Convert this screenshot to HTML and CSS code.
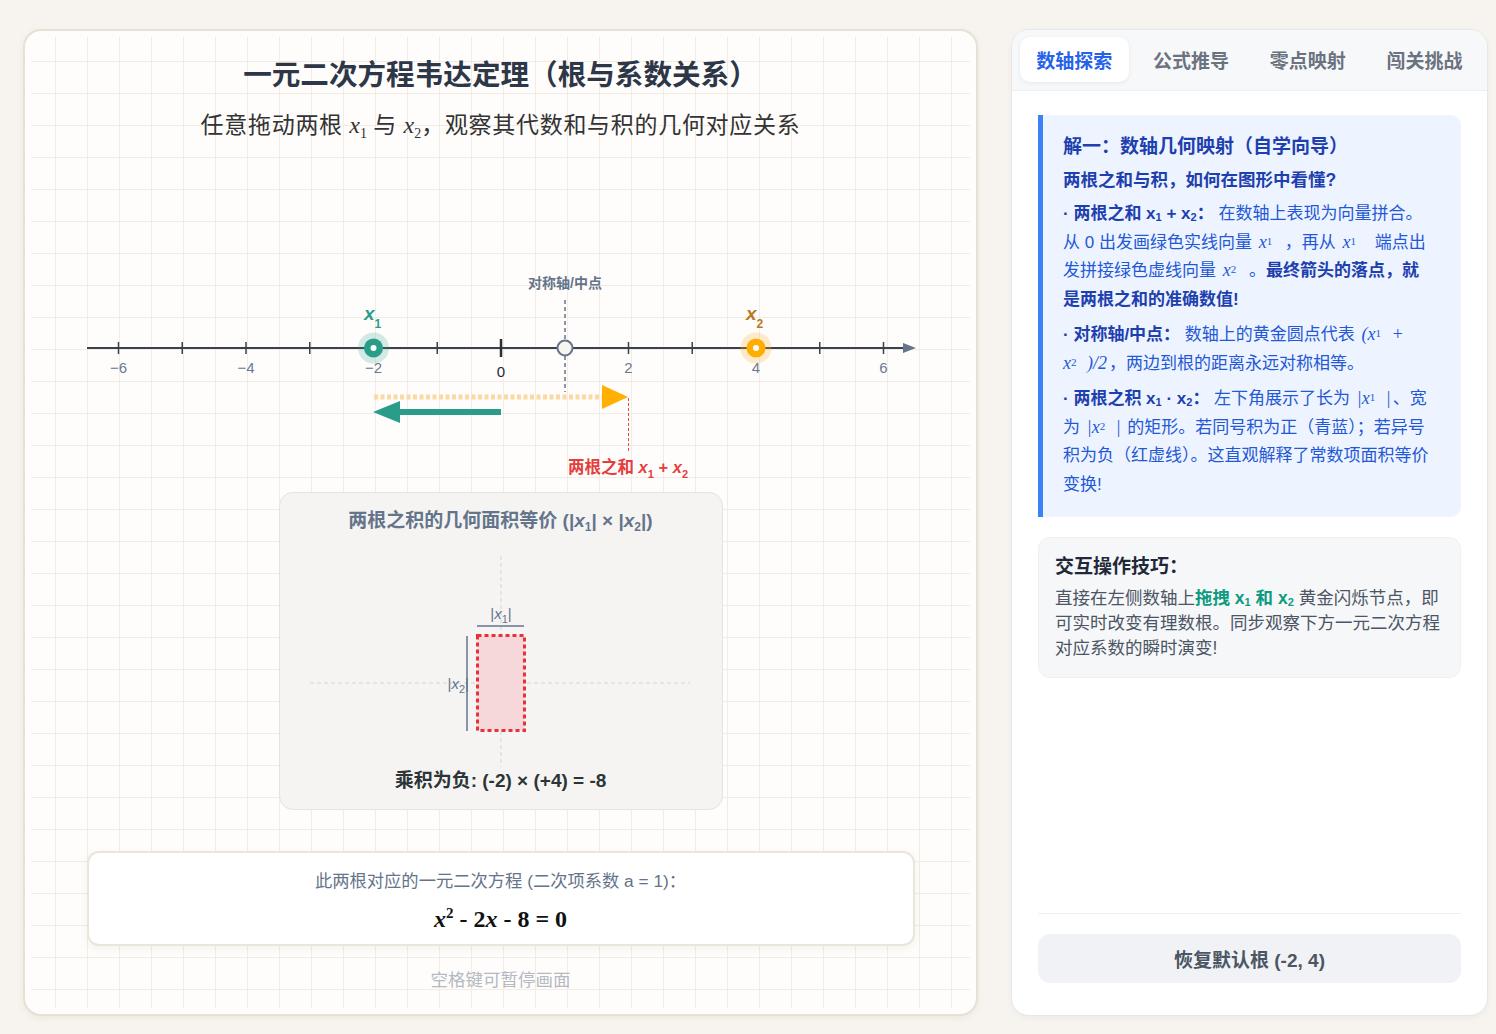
FILE: index.html
```html
<!DOCTYPE html>
<html lang="zh-CN">
<head>
<meta charset="utf-8">
<title>韦达定理 · 数轴探索</title>
<link rel="stylesheet" href="styles.css">
</head>
<body>
<main class="board">
  <div class="sheet">
    <h1 class="title">一元二次方程韦达定理（根与系数关系）</h1>
    <p class="subtitle">任意拖动两根 <i class="mv">x<sub>1</sub></i> 与 <i class="mv">x<sub>2</sub></i>，观察其代数和与积的几何对应关系</p>

    <!-- number line, drawn in page coordinates -->
    <svg class="axis" viewBox="31 141 939 345" width="939" height="345">
      <line x1="87" y1="347" x2="906" y2="347" class="axis-line"/>
      <polygon points="903,342 916,347 903,352" class="axis-head"/>

      <g class="ticks">
        <line x1="118.5" y1="341" x2="118.5" y2="353"/>
        <line x1="182.25" y1="341" x2="182.25" y2="353"/>
        <line x1="246" y1="341" x2="246" y2="353"/>
        <line x1="309.75" y1="341" x2="309.75" y2="353"/>
        <line x1="373.5" y1="341" x2="373.5" y2="353"/>
        <line x1="437.25" y1="341" x2="437.25" y2="353"/>
        <line x1="564.75" y1="341" x2="564.75" y2="353"/>
        <line x1="628.5" y1="341" x2="628.5" y2="353"/>
        <line x1="692.25" y1="341" x2="692.25" y2="353"/>
        <line x1="756" y1="341" x2="756" y2="353"/>
        <line x1="819.75" y1="341" x2="819.75" y2="353"/>
        <line x1="883.5" y1="341" x2="883.5" y2="353"/>
      </g>
      <line x1="501" y1="338" x2="501" y2="356" class="tick-zero"/>

      <g class="tick-labels">
        <text x="118.5" y="372">−6</text>
        <text x="246" y="372">−4</text>
        <text x="373.5" y="372">−2</text>
        <text x="628.5" y="372">2</text>
        <text x="756" y="372">4</text>
        <text x="883.5" y="372">6</text>
      </g>
      <text x="501" y="376" class="zero-label">0</text>

      <!-- axis of symmetry -->
      <line x1="565" y1="299" x2="565" y2="391" class="mid-line"/>
      <text x="565" y="287" class="mid-label">对称轴/中点</text>
      <circle cx="565" cy="347" r="7.5" class="mid-dot"/>

      <!-- sum as chained vectors -->
      <line x1="501" y1="411" x2="396" y2="411" class="vec-x1"/>
      <polygon points="373,411 400,400 400,422" class="vec-x1-head"/>
      <line x1="374" y1="396" x2="602" y2="396" class="vec-x2"/>
      <polygon points="602,384 628,396 602,408" class="vec-x2-head"/>
      <line x1="628.5" y1="397" x2="628.5" y2="452" class="sum-drop"/>
      <text x="628" y="472" class="sum-label">两根之和 <tspan class="it">x</tspan><tspan dy="5" class="sub">1</tspan><tspan dy="-5"> + </tspan><tspan class="it">x</tspan><tspan dy="5" class="sub">2</tspan></text>

      <!-- roots -->
      <circle cx="373.5" cy="347" r="15.5" class="halo-teal"/>
      <circle cx="373.5" cy="347" r="9.5" class="dot-teal"/>
      <circle cx="373.5" cy="347" r="3" class="dot-core"/>
      <text x="364" y="319" class="root-label teal">x<tspan dy="8" class="sub">1</tspan></text>

      <circle cx="756" cy="347" r="15.5" class="halo-gold"/>
      <circle cx="756" cy="347" r="9.5" class="dot-gold"/>
      <circle cx="756" cy="347" r="3" class="dot-core"/>
      <text x="746" y="319" class="root-label gold">x<tspan dy="8" class="sub">2</tspan></text>
    </svg>

    <section class="product">
      <h2 class="product-title">两根之积的几何面积等价 (|<i>x</i><sub>1</sub>| × |<i>x</i><sub>2</sub>|)</h2>
      <svg class="product-figure" viewBox="280 540 442 226" width="442" height="226">
        <line x1="310" y1="682" x2="690" y2="682" class="guide"/>
        <line x1="501" y1="555" x2="501" y2="766" class="guide"/>
        <rect x="477.5" y="634.5" width="47" height="95" class="area"/>
        <line x1="477" y1="625" x2="524" y2="625" class="measure"/>
        <line x1="467" y1="635" x2="467" y2="730" class="measure"/>
        <text x="501" y="618" class="measure-label" text-anchor="middle">|<tspan class="it">x</tspan><tspan dy="4" class="msub">1</tspan><tspan dy="-4">|</tspan></text>
        <text x="469" y="688" class="measure-label" text-anchor="end">|<tspan class="it">x</tspan><tspan dy="4" class="msub">2</tspan><tspan dy="-4">|</tspan></text>
      </svg>
      <p class="product-result">乘积为负: (-2) × (+4) = -8</p>
    </section>

    <section class="equation">
      <p class="eq-label">此两根对应的一元二次方程 (二次项系数 a = 1)：</p>
      <p class="eq"><i>x</i><sup>2</sup> - 2<i>x</i> - 8 = 0</p>
    </section>

    <p class="hint">空格键可暂停画面</p>
  </div>
</main>

<aside class="panel">
  <nav class="tabs">
    <button class="tab active">数轴探索</button>
    <button class="tab">公式推导</button>
    <button class="tab">零点映射</button>
    <button class="tab">闯关挑战</button>
  </nav>

  <div class="panel-body">
    <section class="guide-box">
      <h3 class="guide-title">解一：数轴几何映射（自学向导）</h3>
      <h4 class="guide-sub">两根之和与积，如何在图形中看懂?</h4>
      <p><b>· 两根之和 x<span class="s">1</span> + x<span class="s">2</span>：</b> 在数轴上表现为向量拼合。<br>从 0 出发画绿色实线向量 <i class="m">x<sub>1</sub></i> ，再从 <i class="m wide">x<sub>1</sub></i> 端点出<br>发拼接绿色虚线向量 <i class="m">x<sub>2</sub></i> 。<b>最终箭头的落点，就<br>是两根之和的准确数值!</b></p>
      <p><b>· 对称轴/中点：</b> 数轴上的黄金圆点代表 <i class="m">(x<sub>1</sub> +</i><br><i class="m first">x<sub>2</sub> )/2</i>，两边到根的距离永远对称相等。</p>
      <p><b>· 两根之积 x<span class="s">1</span> · x<span class="s">2</span>：</b> 左下角展示了长为 <i class="m">|x<sub>1</sub> |</i>、宽<br>为 <i class="m">|x<sub>2</sub> |</i> 的矩形。若同号积为正（青蓝）；若异号<br>积为负（红虚线）。这直观解释了常数项面积等价<br>变换!</p>
    </section>

    <section class="tips">
      <h3 class="tips-title">交互操作技巧：</h3>
      <p class="tips-text">直接在左侧数轴上<b class="hl">拖拽 x<span class="s">1</span> 和 x<span class="s">2</span></b> 黄金闪烁节点，即可实时改变有理数根。同步观察下方一元二次方程对应系数的瞬时演变!</p>
    </section>

    <footer class="panel-foot">
      <button class="reset">恢复默认根 (-2, 4)</button>
    </footer>
  </div>
</aside>
</body>
</html>
```

FILE: styles.css
```css
* {
  box-sizing: border-box;
  margin: 0;
  padding: 0;
}

html, body {
  height: 100%;
}

body {
  display: flex;
  gap: 33px;
  padding: 29px 8px 18px 23px;
  background: #f7f4ef;
  font-family: "Liberation Sans", "Noto Sans CJK SC", sans-serif;
  color: #1f2937;
  overflow: hidden;
}

/* ---------- left board ---------- */

.board {
  flex: none;
  width: 955px;
  height: 987px;
  padding: 6px;
  border: 2px solid #e6e0d5;
  border-radius: 18px;
  background: #fefdfb;
  box-shadow: 0 2px 6px rgba(120, 100, 70, 0.08);
}

.sheet {
  height: 100%;
  padding-top: 20px;
  display: flex;
  flex-direction: column;
  align-items: center;
  border-radius: 10px;
  background-image:
    linear-gradient(to right, #f2ede4 1px, transparent 1px),
    linear-gradient(to bottom, #f2ede4 1px, transparent 1px);
  background-size: 32px 32px;
  background-position: -8px -8px;
}

.title {
  font-size: 28.6px;
  line-height: 36px;
  font-weight: 700;
  color: #2d3748;
  text-align: center;
}

.subtitle {
  margin-top: 16px;
  font-family: "Liberation Serif", "Noto Sans CJK SC", serif;
  font-size: 23px;
  letter-spacing: 0.7px;
  line-height: 32px;
  color: #333;
}

.mv {
  font-family: "Liberation Serif", serif;
  font-style: italic;
  font-size: 24px;
  letter-spacing: 0;
}

.mv sub {
  font-style: normal;
  font-size: 14px;
  line-height: 0;
  vertical-align: -5px;
}

.axis {
  display: block;
  flex: none;
}

.axis-line {
  stroke: #3b414c;
  stroke-width: 2;
}

.axis-head {
  fill: #64748b;
}

.ticks line {
  stroke: #3b414c;
  stroke-width: 1.5;
}

.tick-zero {
  stroke: #2a2f38;
  stroke-width: 2.5;
}

.tick-labels text {
  font-size: 15px;
  fill: #6b7a90;
  text-anchor: middle;
}

.zero-label {
  font-size: 15px;
  fill: #1f2937;
  text-anchor: middle;
}

.mid-line {
  stroke: #64748b;
  stroke-width: 1.5;
  stroke-dasharray: 4 3;
}

.mid-label {
  font-size: 14px;
  font-weight: 700;
  fill: #64748b;
  text-anchor: middle;
}

.mid-dot {
  fill: #f8f5f0;
  stroke: #64748b;
  stroke-width: 2;
}

.vec-x1 {
  stroke: #2a9d8a;
  stroke-width: 6;
}

.vec-x1-head {
  fill: #2a9d8a;
}

.vec-x2 {
  stroke: #fcd9a2;
  stroke-width: 5;
  stroke-dasharray: 4 2.5;
}

.vec-x2-head {
  fill: #ffb000;
}

.sum-drop {
  stroke: #ef4444;
  stroke-width: 1;
  stroke-dasharray: 3 2;
}

.sum-label {
  font-size: 16.5px;
  font-weight: 700;
  fill: #e53e3e;
  text-anchor: middle;
}

.it {
  font-style: italic;
}

.sub {
  font-size: 11px;
}

.halo-teal {
  fill: #2a9d8a;
  opacity: 0.2;
}

.dot-teal {
  fill: #2a9d8a;
}

.halo-gold {
  fill: #f8b23a;
  opacity: 0.25;
}

.dot-gold {
  fill: #ffae00;
}

.dot-core {
  fill: #fff;
}

.root-label {
  font-size: 19px;
  font-weight: 700;
  font-style: italic;
}

.root-label .sub {
  font-size: 12px;
  font-style: normal;
}

.teal {
  fill: #2a9d8a;
}

.gold {
  fill: #b7791f;
}

/* product panel */

.product {
  flex: none;
  margin-top: 5px;
  width: 444px;
  padding: 16px 0;
  border: 1px solid #e6e3de;
  border-radius: 14px;
  background: rgba(245, 244, 241, 0.96);
  text-align: center;
}

.product-title {
  font-size: 19px;
  line-height: 24px;
  font-weight: 700;
  color: #64748b;
}

.product-title sub {
  font-size: 12px;
  line-height: 0;
  vertical-align: -4px;
}

.product-figure {
  display: block;
  margin-top: 8px;
}

.guide {
  stroke: #cfd5dd;
  stroke-width: 1;
  stroke-dasharray: 4 3;
}

.area {
  fill: #f7d8da;
  stroke: #e5323b;
  stroke-width: 3;
  stroke-dasharray: 4 3;
}

.measure {
  stroke: #64748b;
  stroke-width: 1.5;
}

.measure-label {
  font-size: 15px;
  fill: #64748b;
}

.msub {
  font-size: 11px;
}

.product-result {
  margin-top: 2px;
  font-size: 19px;
  line-height: 24px;
  font-weight: 700;
  color: #2d3436;
}

/* equation card */

.equation {
  flex: none;
  margin-top: 41px;
  width: 828px;
  padding: 17px 0 10px;
  border: 2px solid #ebe5db;
  border-radius: 12px;
  background: #fff;
  box-shadow: 0 3px 8px rgba(90, 70, 40, 0.06);
  text-align: center;
}

.eq-label {
  font-size: 17.3px;
  line-height: 22px;
  color: #64748b;
}

.eq {
  margin-top: 12px;
  font-family: "Liberation Serif", serif;
  font-size: 24px;
  line-height: 30px;
  font-weight: 700;
  color: #111;
}

.eq sup {
  font-size: 15px;
  line-height: 0;
  vertical-align: 9px;
}

.hint {
  margin-top: 22px;
  font-size: 17.5px;
  line-height: 24px;
  color: #b4b9c2;
}

/* ---------- right panel ---------- */

.panel {
  flex: none;
  width: 477px;
  height: 987px;
  display: flex;
  flex-direction: column;
  border: 1px solid #e5e7eb;
  border-radius: 18px;
  background: #fff;
  overflow: hidden;
  box-shadow: 0 2px 6px rgba(0, 0, 0, 0.04);
}

.tabs {
  display: flex;
  gap: 8px;
  padding: 7px 8px 8px;
  background: #f7f8fa;
  border-bottom: 1px solid #eceef1;
}

.tab {
  flex: 1;
  height: 45px;
  border: none;
  border-radius: 10px;
  background: transparent;
  font-family: inherit;
  font-size: 19px;
  font-weight: 700;
  color: #6b7280;
}

.tab.active {
  background: #fff;
  color: #2563eb;
  box-shadow: 0 1px 4px rgba(0, 0, 0, 0.07);
}

.panel-body {
  flex: 1;
  display: flex;
  flex-direction: column;
  padding: 24px 26px 32px;
}

.guide-box {
  padding: 19px 10px 18px 20px;
  border-left: 5px solid #3b82f6;
  border-radius: 0 10px 10px 0;
  background: #edf4ff;
  color: #2458d6;
}

.guide-title {
  font-size: 19px;
  line-height: 26px;
  font-weight: 700;
  color: #1e40af;
}

.guide-sub {
  margin-top: 7px;
  font-size: 17.5px;
  line-height: 26px;
  font-weight: 700;
  color: #1e40af;
}

.guide-box p {
  margin-top: 7px;
  font-size: 17px;
  line-height: 28.5px;
}

.guide-box b {
  color: #1e40af;
}

.s {
  font-size: 11px;
  vertical-align: -2px;
  line-height: 0;
}

.m {
  font-family: "Liberation Serif", serif;
  font-style: italic;
  font-size: 18px;
  line-height: 0;
  padding: 0 2px;
}

.m.wide {
  padding-right: 8px;
}

.m.first {
  padding-left: 0;
}

.m sub {
  font-size: 11px;
  font-style: normal;
  line-height: 0;
  vertical-align: 3px;
  margin-right: 6px;
}

.tips {
  margin-top: 20px;
  padding: 16px;
  border: 1px solid #eef0f3;
  border-radius: 12px;
  background: #f6f7f9;
}

.tips-title {
  font-size: 19px;
  line-height: 26px;
  font-weight: 700;
  color: #1f2937;
}

.tips-text {
  margin-top: 6px;
  font-size: 17.5px;
  line-height: 25px;
  color: #4b5563;
}

.hl {
  color: #0f9b7f;
}

.panel-foot {
  margin-top: auto;
  padding-top: 20px;
  border-top: 1px solid #eceef1;
}

.reset {
  width: 100%;
  height: 49px;
  border: none;
  border-radius: 12px;
  background: #f0f2f5;
  font-family: inherit;
  font-size: 19px;
  font-weight: 700;
  color: #4b5563;
}
```
